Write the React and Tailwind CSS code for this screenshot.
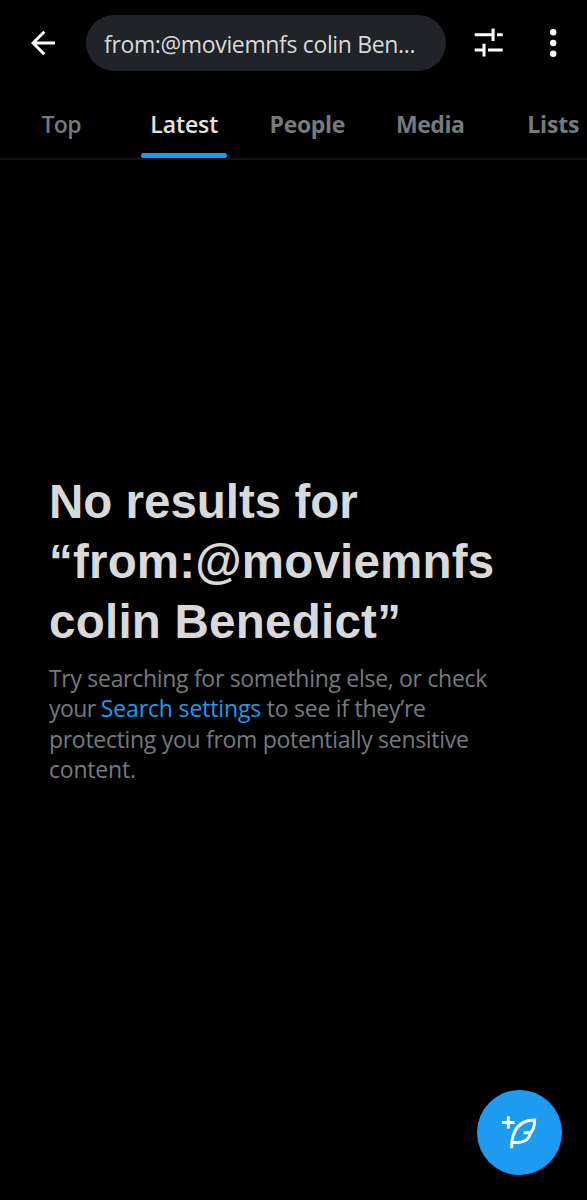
import React from 'react';

const TABS = [
    { label: 'Top', text: 'font-semibold tracking-[-0.6px]' },
    { label: 'Latest', text: 'font-semibold tracking-[-0.1px]' },
    { label: 'People', text: 'font-bold tracking-[-0.35px]' },
    { label: 'Media', text: 'font-bold tracking-[-0.4px]' },
    { label: 'Lists', text: 'font-bold tracking-[-0.2px]' },
];

function SearchHeader() {
    return (
        <header className="flex h-[86px] items-center text-white">
            <button className="ml-[28px] mr-[28px] shrink-0" aria-label="Back">
                <svg className="h-[30px] w-[30px]" viewBox="0 0 30 30" fill="none" stroke="currentColor" strokeWidth="2.9">
                    <path d="M27 15H4.5M16.3 3.8L5 15L16.3 26.2" />
                </svg>
            </button>

            <div className="flex h-14 w-[360px] shrink-0 items-center rounded-full bg-[#202327] pl-[18px] pt-[3px]">
                <span className="whitespace-nowrap text-[23px] leading-none tracking-[-0.35px] text-[#d9d9d9]">
                    from:@moviemnfs colin Ben...
                </span>
            </div>

            <button className="ml-7 shrink-0" aria-label="Filters">
                <svg className="h-[30px] w-[30px]" viewBox="0 0 30 30" fill="none" stroke="currentColor" strokeWidth="3">
                    <path d="M0.7 6.7H18.5M19.1 0.4V13M23 6.7H28.7" />
                    <path d="M0.7 22H9.5M10 15.8V28.4M14 22H28.7" />
                </svg>
            </button>

            <button className="ml-[45px] shrink-0" aria-label="More">
                <svg className="h-[30px] w-2" viewBox="0 0 8 30" fill="currentColor">
                    <circle cx="4.2" cy="4.2" r="3.2" />
                    <circle cx="4.2" cy="15" r="3.2" />
                    <circle cx="4.2" cy="25.8" r="3.2" />
                </svg>
            </button>
        </header>
    );
}

function Tabs() {
    return (
        <nav className="-ml-px flex h-[74px] overflow-hidden border-b-2 border-[#121415]">
            {TABS.map((tab) => {
                const active = tab.label === 'Latest';
                return (
                    <button key={tab.label} className="flex w-[123px] shrink-0 flex-col items-center justify-between pt-[26px]">
                        <span className={`pl-[1.5px] text-[23px] leading-6 ${tab.text} ${active ? 'text-[#e0e2e3]' : 'text-[#757a7f]'}`}>
                            {tab.label}
                        </span>
                        {active && <span className="h-[5px] w-[86px] rounded-full bg-[#1d9bf0]" />}
                    </button>
                );
            })}
        </nav>
    );
}

export default function App() {
    return (
        <div className="relative h-[1200px] w-[587px] overflow-hidden bg-black font-['Open_Sans',sans-serif]">
            <SearchHeader />
            <Tabs />

            <main className="whitespace-nowrap pl-[49px] pt-[312px]">
                <h1 className="font-['Liberation_Sans',sans-serif] text-[47.5px] font-bold leading-[60px] text-[#d9d9d9]">
                    <span>No results for</span>
                    <br />
                    <span className="tracking-[0.2px]">“from:@moviemnfs</span>
                    <br />
                    <span className="tracking-[0.25px]">colin Benedict”</span>
                </h1>
                <p className="mt-[10.5px] text-[23px] leading-[30.5px] text-[#757a7f]">
                    <span className="tracking-[-0.3px]">Try searching for something else, or check</span>
                    <br />
                    <span className="tracking-[-0.25px]">
                        <span className="tracking-[-0.6px]">your </span>
                        <a className="tracking-[-0.15px] text-[#1d9bf0]">Search settings</a> to see if they’re
                    </span>
                    <br />
                    <span className="tracking-[-0.3px]">protecting you from potentially sensitive</span>
                    <br />
                    <span className="tracking-[-0.2px]">content.</span>
                </p>
            </main>

            {/* Compose button floats over the timeline */}
            <button className="absolute bottom-[25px] right-[25px] flex h-[85.5px] w-[85.5px] items-center justify-center rounded-full bg-[#1d9bf0] text-white" aria-label="Compose">
                <svg className="h-[85.5px] w-[85.5px]" viewBox="0 0 86 86" fill="none" stroke="currentColor" strokeWidth="3">
                    <path d="M25.2 32.6H37.8M31.5 26.3V38.8" />
                    <path d="M34.8 58.5C34.8 41 41.8 30.5 58 30.2C58 35.5 56.8 40 54 43H46.8M54 43C52.4 49.5 47.5 52.8 41 52.8H35.6" />
                </svg>
            </button>
        </div>
    );
}
